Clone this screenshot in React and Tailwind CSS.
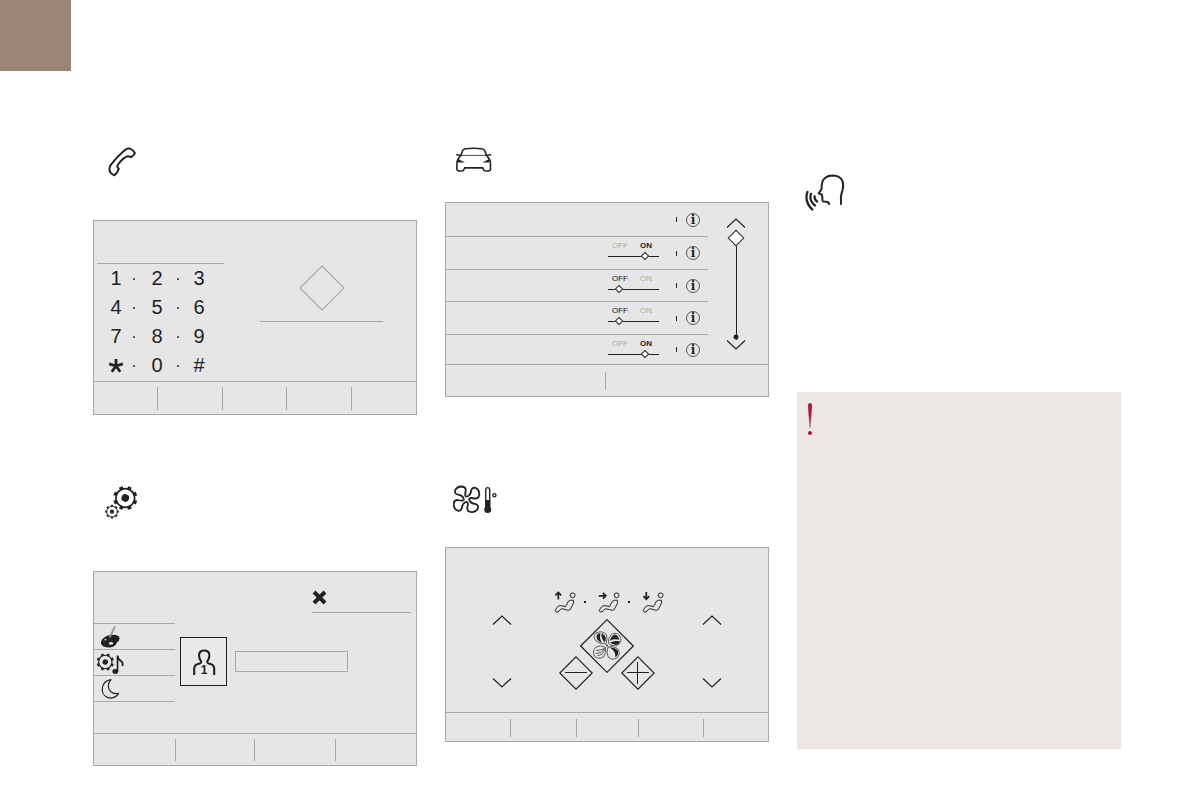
import React, { useState } from "react";
import clsx from "clsx";

const KEYS = [
  ["1", "2", "3"],
  ["4", "5", "6"],
  ["7", "8", "9"],
  ["*", "0", "#"],
];

const SETTINGS = [
  { id: "row-1", toggle: false, height: "h-[34px]" },
  { id: "row-2", toggle: true, on: true, height: "h-[33px]" },
  { id: "row-3", toggle: true, on: false, height: "h-8" },
  { id: "row-4", toggle: true, on: false, height: "h-[33px]" },
  { id: "row-5", toggle: true, on: true, height: "h-[29px]" },
];

function Gear({ cx, cy, r, dot, turn = 0 }) {
  return (
    <g transform={`translate(${cx} ${cy}) rotate(${turn})`}>
      <circle r={r * 0.78} fill="none" stroke="#222" strokeWidth={r * 0.14} />
      <circle
        r={r * 0.87}
        fill="none"
        stroke="#222"
        strokeWidth={r * 0.28}
        pathLength="16"
        strokeDasharray="0.9 1.1"
        strokeDashoffset="0.45"
      />
      <circle r={dot} fill="#222" />
    </g>
  );
}

function PhoneIcon() {
  return (
    <svg width="28" height="30" viewBox="0 0 28 30" fill="none" stroke="#222" strokeWidth="2" strokeLinejoin="round">
      <path d="M17.2 2.7Q19.3 .9 22 1.6Q25.4 2.8 26.9 6.2Q25.8 8.8 23 10.2Q20.8 8.8 19 9.4Q12.5 13 9.3 18.8Q9 20.6 10.8 21.6Q9.6 25.5 6.5 28.2Q1.7 26.5 1.4 22.5Q1.2 20 3 17.6Q9 9.5 17.2 2.7Z" />
    </svg>
  );
}

function CarIcon() {
  return (
    <svg width="36" height="26" viewBox="0 0 36 26" fill="none" stroke="#222" strokeWidth="1.6">
      <path d="M4.8 8.6L6.6 3.8Q7.4 2 9.8 1.8Q17.7 .8 25.6 1.8Q28 2 28.8 3.8L30.6 8.6" />
      <path d="M5 8.4H30.4" strokeWidth="0.8" />
      <path d="M.2 7.8L4.8 8.3L2 12.2Q.9 14 .9 17V21.8Q1 24 3 24H5.4Q7.6 24 8 22.4L8.7 20.9H26.7L27.4 22.4Q27.8 24 30 24H32.4Q34.4 24 34.5 21.8V17Q34.5 14 33.4 12.2L30.6 8.3L35.2 7.8" />
      <path d="M1.6 11.8L9 15.4L2.2 15.6ZM33.8 11.8L26.4 15.4L33.2 15.6Z" fill="#222" stroke="none" />
    </svg>
  );
}

function VoiceIcon() {
  return (
    <svg width="40" height="38" viewBox="0 0 40 38" fill="none" stroke="#222" strokeWidth="2">
      <path d="M24.3 30.8Q24.2 28.2 21.5 27.8L18.2 27.4Q17.2 27 17.4 24.8L17 20.6L13.8 19.4L16.6 14.8Q16.4 7.5 19.3 4.6Q22.5 1.4 28 1.4Q34.8 1.6 37.2 6.4Q38.9 10.5 37.6 15.8Q35.8 21 35.9 24L36 30.8" />
      <path d="M2.8 17Q-1.6 27.4 8 36.2M6.4 19Q3 26 10.7 32.2M9.9 21.4Q8.4 25.2 12.8 28.2" strokeWidth="2.2" />
    </svg>
  );
}

function GearsIcon() {
  return (
    <svg width="36" height="36" viewBox="0 0 36 36">
      <Gear cx={21.3} cy={13} r={12} dot={3.8} turn={22.5} />
      <Gear cx={8} cy={26.7} r={6.8} dot={2.1} />
    </svg>
  );
}

function FanTemperatureIcon() {
  return (
    <svg width="45" height="30" viewBox="0 0 45 30" fill="none" stroke="#222">
      <g transform="translate(13.5 14.3)" strokeWidth="1.8" strokeLinejoin="round">
        {[0, 90, 180, 270].map((a) => (
          <path
            key={a}
            transform={`rotate(${a})`}
            d="M-1.2 -3Q-1.6 -6 -.7 -9Q-1 -12.8 -5 -12.8Q-10 -12.6 -11.4 -8.8Q-12.2 -5.4 -8.4 -4.6Q-4.6 -4.2 -3 -1.2Q-2.4 0 -3 1.2"
          />
        ))}
      </g>
      <path d="M32.7 21.5V4.4Q32.9 2.6 34.7 2.6Q36.5 2.6 36.7 4.4V21.5" strokeWidth="1.4" />
      <path d="M32.7 15.5H36.7V21.5H32.7Z" fill="#222" />
      <circle cx="34.7" cy="24.5" r="3.5" fill="#222" stroke="none" />
      <circle cx="41.4" cy="10.3" r="1.6" strokeWidth="1.3" />
    </svg>
  );
}

function PaletteIcon() {
  return (
    <svg width="32" height="24" viewBox="0 0 32 24">
      <path d="M6 14.6Q9.5 10.4 15.5 9.8Q23.5 9.4 23.6 13.4Q23.4 16 20.8 17.4Q19.8 21.6 14 22.4Q6.2 22.6 5 18.4Q4.8 16.2 6 14.6Z" fill="#222" />
      <ellipse cx="15" cy="18.4" rx="2.1" ry="1.3" fill="#e6e6e6" />
      <circle cx="9.4" cy="14.6" r="0.9" fill="#e6e6e6" />
      <path d="M19 1.5L13.6 12.4" stroke="#999" strokeWidth="1.8" />
    </svg>
  );
}

function SoundSettingsIcon() {
  return (
    <svg width="32" height="24" viewBox="0 0 32 24">
      <Gear cx={9.3} cy={11} r={8.6} dot={2.7} turn={22.5} />
      <ellipse cx="19.3" cy="20.5" rx="2.9" ry="2.4" fill="#222" />
      <path d="M21.5 20.5V4.6Q22 8.6 25 10Q27.6 12 26.4 15" fill="none" stroke="#222" strokeWidth="1.7" />
    </svg>
  );
}

function MoonIcon() {
  return (
    <svg width="32" height="24" viewBox="0 0 32 24" fill="none" stroke="#222" strokeWidth="1.2" strokeLinejoin="round">
      <path d="M15 2.6C4.6 4 3.6 17.4 11.4 20.4C15.6 21.8 20 20.4 22.6 16.4C13.4 18 9.4 9 15 2.6Z" />
    </svg>
  );
}

function UserIcon() {
  return (
    <svg width="24" height="28" viewBox="0 0 24 28" fill="none" stroke="#222" strokeWidth="2.1">
      <path d="M2.2 27V20.8Q2.2 17 6 16Q9.4 15.4 9.2 13.4Q6.8 10.6 7 7Q7.4 2.5 12.2 2.5Q17 2.5 17.4 7Q17.6 10.6 15.2 13.4Q15 15.4 18.4 16Q22.2 17 22.2 20.8V27" />
      <text
        x="12.2"
        y="26"
        textAnchor="middle"
        fontSize="12"
        fontWeight="bold"
        fontFamily="Liberation Sans, sans-serif"
        fill="#222"
        stroke="none"
      >
        1
      </text>
    </svg>
  );
}

function CloseIcon() {
  return (
    <svg width="15" height="15" viewBox="0 0 15 15" stroke="#222" strokeWidth="4">
      <path d="M2 2L13 13M13 2L2 13" />
    </svg>
  );
}

function Chevron({ down }) {
  return (
    <svg width="20" height="10" viewBox="0 0 20 10" fill="none" stroke="#222" strokeWidth="1.2">
      <path d={down ? "M1 .5L10 9L19 .5" : "M1 9.5L10 1L19 9.5"} />
    </svg>
  );
}

const ARROWS = {
  up: "M5.3 9.5V2.5M2.4 5.4L5.3 2.4L8.2 5.4",
  right: "M1.8 5.8H8.6M5.9 2.9L8.8 5.8L5.9 8.7",
  down: "M5.3 2V9M2.4 6.2L5.3 9.2L8.2 6.2",
};

function SeatIcon({ direction }) {
  return (
    <svg width="24" height="24" viewBox="0 0 24 24" fill="none" stroke="#222">
      <path d={ARROWS[direction]} strokeWidth="1.7" />
      <circle cx="19.6" cy="5.3" r="2.4" />
      <path
        d="M2.2 20.7Q3.2 18 5.6 15.8Q9 15.4 12.6 16.6L15.4 11.2Q17.6 9.6 20.4 10.3Q21.2 12 20 14.2L17.2 19.6Q15.4 21 12.6 19.6L8.2 18.7L5 22Q3 22.6 2.2 20.7Z"
        strokeLinejoin="round"
      />
    </svg>
  );
}

function FanDiamond() {
  return (
    <svg width="54" height="54" viewBox="0 0 54 54" fill="none" stroke="#222">
      <path d="M27 .7L53.3 27L27 53.3L.7 27Z" strokeWidth="1.2" />
      <g strokeWidth="0.7">
        <path d="M26 25Q20.5 25.5 16 22Q12 17.5 16 14Q22 11 26.3 15.5Q28 20 26 25Z" />
        <path d="M28.5 24.5Q27.5 19 31.5 15.3Q36.5 12.5 40 17Q42.5 22 38.5 25.5Q33 28.5 28.5 24.5Z" />
        <path d="M28 28Q33 26.5 37.5 29.5Q41 34 37.5 38.8Q32 42 28.2 38Q26 33 28 28Z" />
        <path d="M25.5 28.5Q27 33.5 23.5 38Q18.5 41 14.3 37Q12 31.5 16 28Q20.5 25.5 25.5 28.5Z" />
        <path d="M15.8 34.5Q21 35 25 29.5M16 31.5Q20 31.5 24.5 29.5M17.5 36.5Q22.5 36.5 24.8 31" />
      </g>
      <g fill="#222" stroke="none">
        <path d="M22 24Q14.8 20.8 17 15.6Q18.8 14 20.5 14.2Q18.8 18.5 22 24Z" />
        <path d="M24.8 23.5Q20.5 19 21.6 14.2Q25 15.5 25.8 19Q25.8 21.5 24.8 23.5Z" />
        <path d="M30 23.5Q35.5 21.6 40 22.2Q39.5 25 36.5 25.8Q33 26.2 30 23.5Z" />
        <path d="M30 21.8Q31 17.2 34.5 15.6Q38.4 16 39.2 20.8Q34 19.5 30 21.8Z" />
        <path d="M29.5 28.5Q34.5 28 38 31.5Q39 35.4 35.5 38.6Q35.5 31.5 29.5 28.5Z" />
        <circle cx="27" cy="26.5" r="0.9" />
      </g>
    </svg>
  );
}

function SmallDiamond({ plus }) {
  return (
    <svg width="34" height="34" viewBox="0 0 34 34" fill="none" stroke="#222" strokeWidth="1.2">
      <path d="M17 .8L33.2 17L17 33.2L.8 17Z" />
      <path d={plus ? "M6 16.5H28M16.5 6V28" : "M6 16.5H28"} strokeWidth="1" />
    </svg>
  );
}

function Panel({ label, children }) {
  return (
    <div role="group" aria-label={label} className="flex h-[195px] flex-col border border-[#a9a9a9] bg-[#e6e6e6]">
      {children}
    </div>
  );
}

// bottom bar of a panel, one empty cell per menu entry
function Footer({ cells, className }) {
  return (
    <div className={clsx("grid border-t border-[#a9a9a9]", className)}>
      {Array.from({ length: cells }, (_, i) => (
        <div key={i} className={i < cells - 1 ? "border-r border-[#a9a9a9]" : ""} />
      ))}
    </div>
  );
}

function Switch({ id, on }) {
  const [checked, setChecked] = useState(on);

  return (
    <label htmlFor={id} className="mt-1 w-[51px] self-start text-[8px] leading-[9px]">
      <span className="flex gap-3 pl-1">
        <span className={checked ? "text-[#aaa]" : "text-[#111]"}>OFF</span>
        <span className={checked ? "font-bold text-[#222]" : "text-[#aaa]"}>ON</span>
      </span>
      <input
        id={id}
        type="checkbox"
        role="switch"
        checked={checked}
        onChange={(e) => setChecked(e.target.checked)}
        className="mt-0.5 flex h-2 w-full appearance-none items-center bg-[linear-gradient(#222,#222)] bg-[length:100%_1px] bg-center bg-no-repeat before:ml-2 before:block before:size-[6px] before:rotate-45 before:border before:border-[#222] before:bg-white checked:before:ml-[34px]"
      />
    </label>
  );
}

function PhonePanel() {
  return (
    <Panel label="Phone">
      <div className="flex h-[160px] shrink-0">
        <div className="ml-[3px] mt-[42px] w-[127px] border-t border-[#a9a9a9]">
          <div className="grid grid-cols-[24px_12px_34px_8px_34px] pl-[7px] text-center text-xl leading-[29px]">
            {KEYS.map((row) =>
              row.map((key, i) => (
                <React.Fragment key={key}>
                  {i > 0 && <span className="h-[29px] text-base leading-[29px]">·</span>}
                  {key === "*" ? (
                    <button type="button" aria-label="star" className="flex h-[29px] items-center justify-center">
                      <svg width="16" height="16" viewBox="0 0 16 16" stroke="#222" strokeWidth="2.8">
                        <path d="M8 8V1M8 8L1.2 5.8M8 8L14.8 5.8M8 8L3.8 13.8M8 8L12.2 13.8" />
                      </svg>
                    </button>
                  ) : (
                    <button type="button" className="h-[29px]">{key}</button>
                  )}
                </React.Fragment>
              ))
            )}
          </div>
        </div>
        <div className="ml-9 mt-11 flex h-[57px] w-[123px] justify-center border-b border-[#a9a9a9]">
          <svg width="46" height="46" viewBox="0 0 46 46" fill="none" stroke="#a9a9a9" strokeWidth="1.2">
            <path d="M23 1L45 23L23 45L1 23Z" />
          </svg>
        </div>
      </div>
      <Footer cells={5} className="flex-1 grid-cols-5 pb-1 pt-[5px]" />
    </Panel>
  );
}

function VehiclePanel() {
  return (
    <Panel label="Vehicle">
      <div className="flex h-[161px] shrink-0">
        <ul className="w-[262px]">
          {SETTINGS.map((s, i) => (
            <li
              key={s.id}
              className={clsx(
                "flex items-center justify-end pr-2",
                s.height,
                i < SETTINGS.length - 1 && "border-b border-[#a9a9a9]"
              )}
            >
              {s.toggle && <Switch id={s.id} on={s.on} />}
              <span className="ml-[17px] h-[5px] w-px bg-[#222]" />
              <button
                type="button"
                className="ml-[9px] flex size-[14px] items-center justify-center rounded-full border border-[#555] font-['DejaVu_Serif',serif] text-[12px] font-bold leading-3"
              >
                i
              </button>
            </li>
          ))}
        </ul>
        <div className="flex flex-1 flex-col items-center pr-1 pt-[15px]">
          <button type="button" aria-label="Scroll up">
            <Chevron />
          </button>
          <input
            type="range"
            aria-label="Scroll position"
            min="0"
            max="100"
            defaultValue="0"
            className="mt-1 h-[108px] w-4 appearance-none bg-[radial-gradient(circle_at_8px_calc(100%-3px),#222_2px,transparent_3px),linear-gradient(#222,#222)] bg-[length:100%_100%,1px_100%] bg-center bg-no-repeat [writing-mode:vertical-lr] [&::-webkit-slider-thumb]:size-3 [&::-webkit-slider-thumb]:rotate-45 [&::-webkit-slider-thumb]:appearance-none [&::-webkit-slider-thumb]:border [&::-webkit-slider-thumb]:border-[#222] [&::-webkit-slider-thumb]:bg-white"
          />
          <button type="button" aria-label="Scroll down">
            <Chevron down />
          </button>
        </div>
      </div>
      <Footer cells={2} className="flex-1 grid-cols-[160fr_162fr] pb-1.5 pt-[7px]" />
    </Panel>
  );
}

function ProfilePanel() {
  return (
    <Panel label="Personal settings">
      <div className="flex h-[161px] shrink-0 flex-col">
        <div className="flex h-[41px] justify-end pr-[5px]">
          <div className="flex w-[99px] items-end border-b border-[#a9a9a9] pb-[7px]">
            <button type="button" aria-label="Close">
              <CloseIcon />
            </button>
          </div>
        </div>
        <div className="mt-2.5 flex">
          <ul className="w-[81px] border-t border-[#a9a9a9]">
            {[PaletteIcon, SoundSettingsIcon, MoonIcon].map((Icon, i) => (
              <li key={i} className="flex h-[26px] items-center border-b border-[#a9a9a9] pl-0.5">
                <button type="button">
                  <Icon />
                </button>
              </li>
            ))}
          </ul>
          <button
            type="button"
            aria-label="Profile 1"
            className="ml-[5px] mt-3.5 flex h-[49px] w-[47px] items-center justify-center border border-[#222] bg-[#ebe8e8]"
          >
            <UserIcon />
          </button>
          <input
            type="text"
            aria-label="Profile name"
            className="ml-2 mt-7 h-[21px] w-[113px] border border-[#a9a9a9] px-1 text-xs outline-none"
          />
        </div>
      </div>
      <Footer cells={4} className="flex-1 grid-cols-[82fr_79fr_81fr_80fr] pb-1 pt-[5px]" />
    </Panel>
  );
}

function TemperatureControl({ side }) {
  return (
    <div className="mt-[67px] flex h-[73px] flex-col justify-between">
      <button type="button" aria-label={`${side} warmer`}>
        <Chevron />
      </button>
      <button type="button" aria-label={`${side} cooler`}>
        <Chevron down />
      </button>
    </div>
  );
}

function ClimatePanel() {
  return (
    <Panel label="Air conditioning">
      <div className="flex h-[164px] shrink-0 justify-between px-[46px]">
        <TemperatureControl side="Left" />
        <div className="flex flex-col items-center pt-[42px]">
          <div className="flex items-center pl-1">
            <button type="button" aria-label="Upper vents"><SeatIcon direction="up" /></button>
            <span className="ml-[7px] mr-[11px] size-0.5 bg-[#222]" />
            <button type="button" aria-label="Centre vents"><SeatIcon direction="right" /></button>
            <span className="ml-[7px] mr-[11px] size-0.5 bg-[#222]" />
            <button type="button" aria-label="Lower vents"><SeatIcon direction="down" /></button>
          </div>
          <button type="button" aria-label="Air flow" className="mt-[5px]">
            <FanDiamond />
          </button>
          <div className="-mt-[17px] flex w-24 justify-between">
            <button type="button" aria-label="Less air"><SmallDiamond /></button>
            <button type="button" aria-label="More air"><SmallDiamond plus /></button>
          </div>
        </div>
        <TemperatureControl side="Right" />
      </div>
      <Footer cells={5} className="flex-1 grid-cols-[65fr_66fr_62fr_65fr_64fr] pb-1 pt-1.5" />
    </Panel>
  );
}

function App() {
  return (
    <div className="bg-white font-['Liberation_Sans',Arial,sans-serif] text-[#222] [&_svg]:block">
      <header>
        <div className="size-[71px] bg-[#9c8475]" />
      </header>

      <main className="grid grid-cols-3 gap-7 pb-7 pl-[93px] pr-[70px] pt-[76px]">
        <div className="flex flex-col gap-[70px]">
          <section>
            <div className="h-[73px] pl-[15px]">
              <PhoneIcon />
            </div>
            <PhonePanel />
          </section>
          <section>
            <div className="h-[86px] pl-[11px]">
              <GearsIcon />
            </div>
            <ProfilePanel />
          </section>
        </div>

        <div className="flex flex-col gap-[88px]">
          <section>
            <div className="h-[55px] pl-[11px]">
              <CarIcon />
            </div>
            <VehiclePanel />
          </section>
          <section>
            <div className="h-[62px] pl-2">
              <FanTemperatureIcon />
            </div>
            <ClimatePanel />
          </section>
        </div>

        <div className="pt-[27px]">
          <div className="h-[218px] pl-2">
            <VoiceIcon />
          </div>
          {/* Warning */}
          <aside className="min-h-[357px] bg-[#ece7e2] pl-[9px] pt-2.5">
            <svg width="8" height="34" viewBox="0 0 8 34">
              <defs>
                <linearGradient id="warn" x1="0" y1="0" x2="0" y2="1">
                  <stop offset="0.5" stopColor="#b5123f" />
                  <stop offset="1" stopColor="#b09a8a" />
                </linearGradient>
              </defs>
              <path d="M2 3Q2.2 1 4 1Q5.8 1 6 3L4.6 26H3.4Z" fill="url(#warn)" />
              <circle cx="4" cy="31" r="2.1" fill="#b5123f" />
            </svg>
          </aside>
        </div>
      </main>
    </div>
  );
}

export default App;
